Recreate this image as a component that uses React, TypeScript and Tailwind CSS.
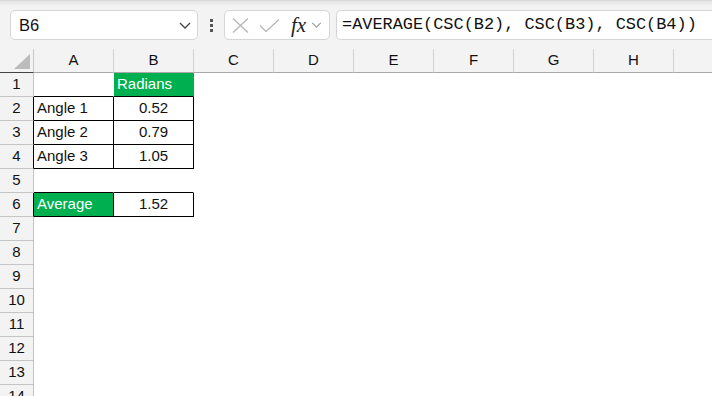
import React from 'react';

type Cell = { text?: string; center?: boolean; green?: boolean; r?: boolean; b?: boolean };

const cols = ['A', 'B', 'C', 'D', 'E', 'F', 'G', 'H', ''];

const data: Record<number, Cell[]> = {
  1: [{ b: true }, { text: 'Radians', green: true, b: true }],
  2: [{ text: 'Angle 1', r: true, b: true }, { text: '0.52', center: true, r: true, b: true }],
  3: [{ text: 'Angle 2', r: true, b: true }, { text: '0.79', center: true, r: true, b: true }],
  4: [{ text: 'Angle 3', r: true, b: true }, { text: '1.05', center: true, r: true, b: true }],
  5: [{ b: true }, { b: true }],
  6: [{ text: 'Average', green: true, r: true, b: true }, { text: '1.52', center: true, r: true, b: true }],
};

const blackLeft = [2, 3, 4, 6];

function Chevron({ className }: { className?: string }) {
  return (
    <svg className={className} viewBox="0 0 12 7" fill="none" stroke="currentColor" strokeWidth="1.3">
      <path d="M1 1l5 5 5-5" />
    </svg>
  );
}

function FormulaBar() {
  return (
    <div className="flex items-center h-[30px] mt-[4px]">
      <div className="ml-[10px] w-[188px] h-[30px] bg-white border border-[#d6d6d6] rounded-[5px] flex items-center justify-between pl-[8px] pr-[6px]">
        <span className="text-[16.5px] text-[#111]">B6</span>
        <Chevron className="w-[12px] h-[7px] text-[#444]" />
      </div>
      <div className="w-[26px] flex flex-col items-center gap-[2px]">
        <span className="w-[3px] h-[3px] bg-[#555]" />
        <span className="w-[3px] h-[3px] bg-[#555]" />
        <span className="w-[3px] h-[3px] bg-[#555]" />
      </div>
      <div className="w-[106px] h-[30px] bg-white border border-[#d6d6d6] rounded-[5px] flex items-center pl-[7px]">
        <svg className="w-[17px] h-[15px] text-[#b4b4b4]" viewBox="0 0 17 15" fill="none" stroke="currentColor" strokeWidth="1.2">
          <path d="M1 0.5l15 14M16 0.5l-15 14" />
        </svg>
        <svg className="ml-[10px] w-[21px] h-[13px] text-[#b4b4b4]" viewBox="0 0 21 13" fill="none" stroke="currentColor" strokeWidth="1.2">
          <path d="M1 6.5l6 6 13-12" />
        </svg>
        <span className="ml-[11px] text-[21px] italic text-[#222] leading-none" style={{ fontFamily: '"Liberation Serif", "DejaVu Serif", serif' }}>
          fx
        </span>
        <Chevron className="ml-[5px] w-[11px] h-[6px] text-[#999]" />
      </div>
      <div className="ml-[6px] flex-1 h-[30px] bg-white border border-[#d6d6d6] border-r-0 rounded-l-[5px] flex items-center pl-[5px]">
        <span className="text-[16.9px] text-[#111] whitespace-nowrap" style={{ fontFamily: '"Liberation Mono", "DejaVu Sans Mono", monospace' }}>
          =AVERAGE(CSC(B2), CSC(B3), CSC(B4))
        </span>
      </div>
    </div>
  );
}

function Grid() {
  const rows = Array.from({ length: 14 }, (_, i) => i + 1);
  return (
    <div className="mt-[9px] text-[15px] text-[#111]">
      <div className="flex h-[24px]">
        <div className="w-[34px] shrink-0 border-r border-r-[#c8c8c8] border-b border-b-[#444] flex items-end justify-end pr-[3px] pb-[3px]">
          <svg width="16" height="15" viewBox="0 0 16 15">
            <polygon points="16,0 16,15 0,15" fill="#bcbcbc" />
          </svg>
        </div>
        {cols.map((c, i) => (
          <div key={i} className="w-[80px] shrink-0 border-r border-r-[#d0d0d0] border-b border-b-[#a8a8a8] flex items-center justify-center">
            {c}
          </div>
        ))}
      </div>
      {rows.map((r) => {
        const cells = data[r] || [];
        return (
          <div key={r} className="flex h-[24px]">
            <div
              className={`w-[34px] shrink-0 border-r border-b border-b-[#c4c4c4] flex items-center justify-center ${
                blackLeft.includes(r) ? 'border-r-black' : 'border-r-[#c4c4c4]'
              }`}
            >
              {r}
            </div>
            {cols.map((c, i) => {
              const cell = cells[i] || {};
              return (
                <div
                  key={i}
                  className={`w-[80px] shrink-0 border-r border-b flex items-center px-[3px] ${cell.green ? 'bg-[#00b050] text-white' : 'bg-white'} ${
                    cell.r ? 'border-r-black' : 'border-r-transparent'
                  } ${cell.b ? 'border-b-black' : 'border-b-transparent'} ${cell.center ? 'justify-center' : ''}`}
                >
                  {cell.text}
                </div>
              );
            })}
          </div>
        );
      })}
    </div>
  );
}

export default function App() {
  return (
    <div className="w-[712px] h-[396px] overflow-hidden bg-[#f3f3f3]" style={{ fontFamily: '"Liberation Sans", Arial, sans-serif' }}>
      <div className="h-[6px] bg-gradient-to-b from-[#e2e2e2] to-[#f3f3f3] border-t border-[#dadada]" />
      <FormulaBar />
      <Grid />
    </div>
  );
}
